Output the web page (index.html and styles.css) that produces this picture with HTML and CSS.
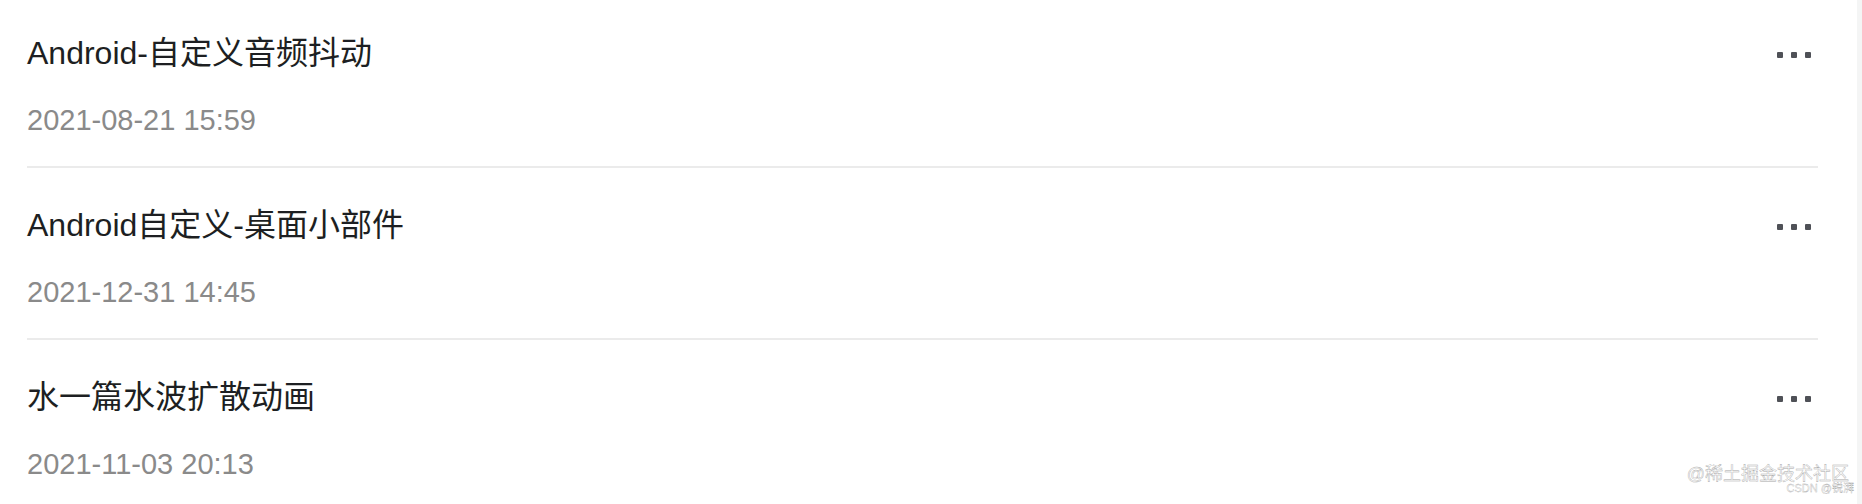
FILE: index.html
```html
<!DOCTYPE html>
<html>
<head>
    <meta charset="UTF-8">
    <title>文章列表</title>
    <link rel="stylesheet" href="styles.css">
</head>
<body>
    <div class="page">
        <ul class="list">
            <li class="item">
                <div class="info">
                    <div class="title">Android-自定义音频抖动</div>
                    <div class="date">2021-08-21 15:59</div>
                </div>
                <div class="more"><span></span><span></span><span></span></div>
            </li>
            <li class="item">
                <div class="info">
                    <div class="title">Android自定义-桌面小部件</div>
                    <div class="date">2021-12-31 14:45</div>
                </div>
                <div class="more"><span></span><span></span><span></span></div>
            </li>
            <li class="item">
                <div class="info">
                    <div class="title">水一篇水波扩散动画</div>
                    <div class="date">2021-11-03 20:13</div>
                </div>
                <div class="more"><span></span><span></span><span></span></div>
            </li>
        </ul>

        <div class="watermark">
            <div class="wm-main">@稀土掘金技术社区</div>
            <div class="wm-sub">CSDN @锐湃</div>
        </div>
    </div>
</body>
</html>
```

FILE: styles.css
```css
html, body {
    margin: 0;
    padding: 0;
    height: 100%;
    overflow: hidden;
}
body {
    background: #f4f5f5;
    font-family: "Liberation Sans", "Noto Sans CJK SC", sans-serif;
}
.page {
    position: relative;
    display: flow-root;
    background: #fff;
    margin-right: 5px;
    height: 100%;
}
.list {
    list-style: none;
    margin: -4px 39px 0 27px;
    padding: 0;
}
.item {
    display: flex;
    align-items: flex-start;
    justify-content: space-between;
    padding: 35px 7px 26px 0;
    border-bottom: 2px solid #ebebeb;
}
.title {
    font-size: 32px;
    line-height: 44px;
    color: #1d1f22;
}
.date {
    margin-top: 25px;
    font-size: 29px;
    line-height: 40px;
    color: #8a8a8a;
}
.more {
    display: flex;
    align-items: center;
    gap: 8px;
    height: 44px;
    margin-top: 2px;
}
.more span {
    width: 6px;
    height: 6px;
    border-radius: 1px;
    background: #4f5157;
}
.watermark {
    position: absolute;
    right: 3px;
    bottom: 10px;
    text-align: right;
    line-height: 1;
}
.wm-main {
    margin-right: 5px;
    font-size: 18px;
    color: #fff;
    -webkit-text-stroke: 0.4px #a8a8a8;
}
.wm-sub {
    margin-top: 0;
    font-size: 11px;
    color: #fff;
    -webkit-text-stroke: 0.3px #a8a8a8;
}
```
